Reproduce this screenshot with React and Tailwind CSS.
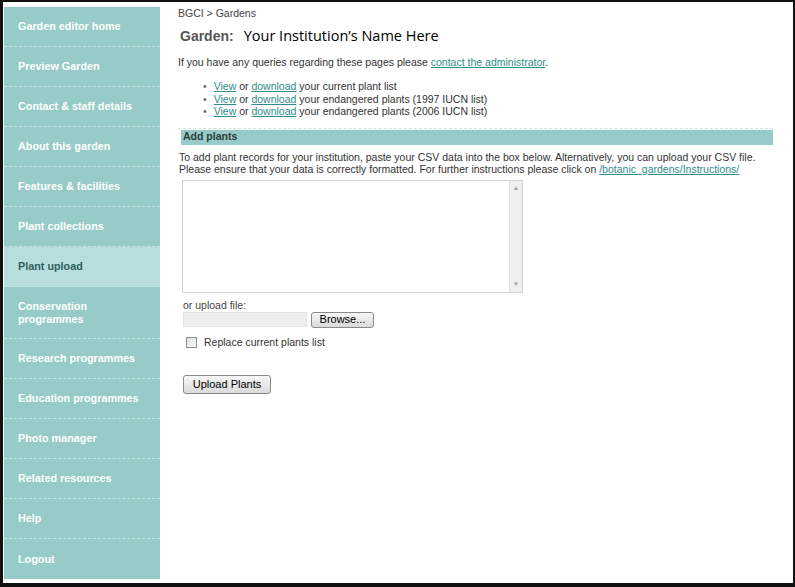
import React from 'react';

const navItems = [
  'Garden editor home',
  'Preview Garden',
  'Contact & staff details',
  'About this garden',
  'Features & facilities',
  'Plant collections',
  'Plant upload',
  'Conservation programmes',
  'Research programmes',
  'Education programmes',
  'Photo manager',
  'Related resources',
  'Help',
  'Logout',
];

const Sidebar = () => (
  <div className="w-[156px] h-[572px] bg-[#96cbc7] flex flex-col shrink-0">
    {navItems.map((label, idx) => {
      const active = label === 'Plant upload';
      const tall = label === 'Conservation programmes';
      const last = idx === navItems.length - 1;
      return (
        <div
          key={label}
          className={`flex items-center pl-[14px] pr-2 text-[10.8px] font-bold leading-[13px] ${
            tall ? 'h-[53px]' : 'h-[40px]'
          } ${last ? '' : 'border-b border-dashed border-[#c6e4e1]'} ${
            active ? 'bg-[#b7dedd] text-[#2f5f5c]' : 'text-white'
          }`}
        >
          {label}
        </div>
      );
    })}
  </div>
);

const Btn = ({ children, className = '' }) => (
  <button
    className={`border border-[#8a8a8a] rounded-[3px] bg-gradient-to-b from-[#f7f7f7] to-[#dadada] text-[11px] text-black leading-none ${className}`}
  >
    {children}
  </button>
);

const PlantLink = ({ children }) => (
  <a href="#" className="text-[#2f8c8a] underline">{children}</a>
);

const Content = () => (
  <div className="flex-1 pl-[18px] pr-[20px] text-[10.5px] text-[#333]">
    <div className="leading-[13px] text-[#444]">BGCI &gt; Gardens</div>

    <div className="mt-[5px] flex items-baseline h-[20px]">
      <span className="text-[14px] font-bold text-[#555] ml-[2px]">Garden:</span>
      <span className="ml-[10px] text-[14.5px] text-black" style={{ fontFamily: '"Open Sans", sans-serif' }}>
        Your Institution’s Name Here
      </span>
    </div>

    <p className="mt-[11px] leading-[13px]">
      If you have any queries regarding these pages please <PlantLink>contact the administrator</PlantLink>.
    </p>

    <ul className="mt-[11px] ml-[25px] leading-[12.5px]">
      {['your current plant list', 'your endangered plants (1997 IUCN list)', 'your endangered plants (2006 IUCN list)'].map(
        (t) => (
          <li key={t} className="flex gap-[7px]">
            <span className="text-[#666]">•</span>
            <span>
              <PlantLink>View</PlantLink> or <PlantLink>download</PlantLink> {t}
            </span>
          </li>
        )
      )}
    </ul>

    <div className="mt-[10px] border-t border-dashed border-[#cfe7e5]" />

    <div className="mt-[1px] ml-[3px] h-[15px] bg-[#96cbc7] flex items-center pl-[2px] font-bold text-[#2e3b3a]">
      Add plants
    </div>

    <p className="mt-[6px] ml-[1px] leading-[12px]">
      To add plant records for your institution, paste your CSV data into the box below. Alternatively, you can upload your CSV file.
      <br />
      Please ensure that your data is correctly formatted. For further instructions please click on{' '}
      <PlantLink>/botanic_gardens/Instructions/</PlantLink>
    </p>

    <div className="mt-[5px] ml-[4px] w-[341px] h-[113px] border border-[#d2d2d2] flex">
      <textarea className="flex-1 resize-none outline-none bg-white" />
      <div className="w-[13px] bg-[#efefef] border-l border-[#e2e2e2] flex flex-col justify-between items-center py-[3px] text-[6px] text-[#999]">
        <span>▲</span>
        <span>▼</span>
      </div>
    </div>

    <div className="mt-[6px] ml-[5px] leading-[13px] text-[#444]">or upload file:</div>
    <div className="mt-[0px] ml-[5px] flex items-center gap-[4px]">
      <div className="w-[124px] h-[15px] bg-[#eeeeee] border border-[#e3e3e3]" />
      <Btn className="w-[63px] h-[16px]">Browse...</Btn>
    </div>

    <label className="mt-[7px] ml-[8px] flex items-center gap-[7px] text-[10.5px] text-[#333]">
      <span className="w-[11px] h-[11px] border border-[#8f8f8f] bg-gradient-to-br from-[#dcdcdc] to-[#ffffff]" />
      Replace current plants list
    </label>

    <Btn className="mt-[25px] ml-[5px] w-[88px] h-[19px]">Upload Plants</Btn>
  </div>
);

export default function App() {
  return (
    <div
      className="w-[795px] h-[587px] border-t-2 border-l-[3px] border-r-2 border-b-4 border-[#111] bg-white flex pt-[5px] pl-[1px] pb-[4px]"
      style={{ fontFamily: '"Liberation Sans", Arial, sans-serif' }}
    >
      <Sidebar />
      <Content />
    </div>
  );
}
